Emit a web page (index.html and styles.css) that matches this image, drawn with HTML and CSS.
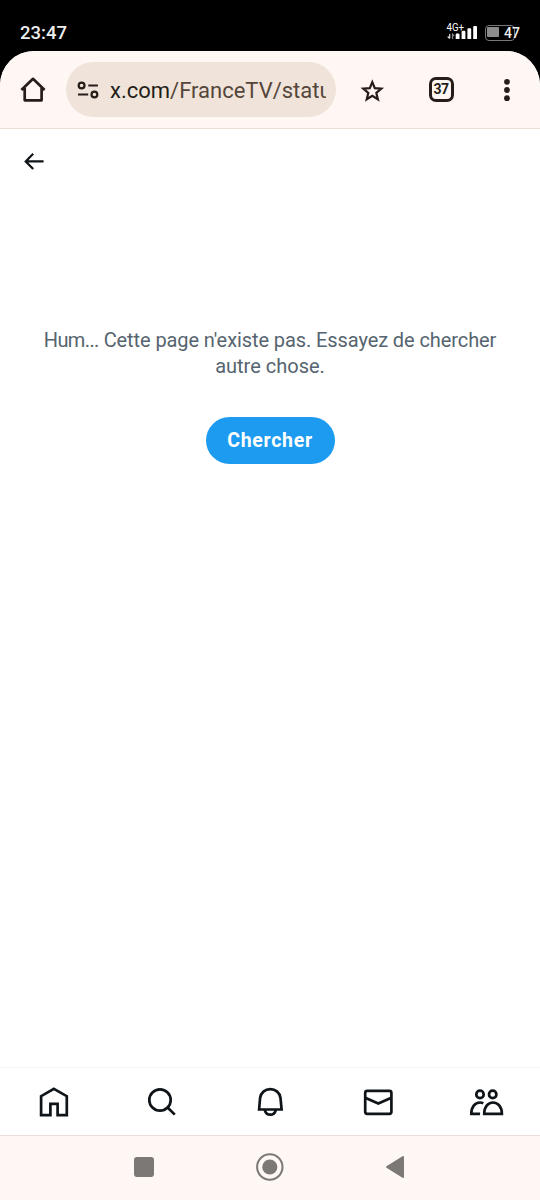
FILE: index.html
```html
<!DOCTYPE html>
<html lang="fr">
<head>
<meta charset="utf-8">
<meta name="viewport" content="width=device-width">
<title>X</title>
<link rel="stylesheet" href="styles.css">
</head>
<body>
<div class="phone">
  <div class="status">
    <span class="clock">23:47</span>
    <div class="indicators">
      <svg class="signal" width="34" height="20" viewBox="446 21 34 20">
        <text class="network" x="446.5" y="31" textLength="17.5" lengthAdjust="spacingAndGlyphs">4G+</text>
        <path fill="#fff" d="M455.7 34.6q0-1 1-1h1.8q1 0 1 1V39h-3.8zM461.6 31.7q0-1 1-1h1.8q1 0 1 1V39h-3.8zM467.4 29.3q0-1 1-1h1.8q1 0 1 1V39h-3.8zM473.2 27q0-1 1-1h1.8q1 0 1 1v12h-3.8z"/>
        <path stroke="#ddd" stroke-width="1.2" fill="none" d="M449.7 34v4.5m-2-2 2 2"/>
        <path stroke="#888" stroke-width="1.2" fill="none" d="M452.5 39v-4.7l1.7 1.7"/>
      </svg>
      <div class="battery"><span class="charge"></span><span class="percent">47</span></div>
    </div>
  </div>
  <div class="screen">
    <header class="toolbar">
      <svg class="tool" width="28" height="28" viewBox="19 76 28 28" fill="none" stroke="#241d18" stroke-width="2.7" stroke-linejoin="round">
        <path d="M21.4 89.9 33 78.8l11.6 11.1M24.7 88v12.3h16.9V88"/>
      </svg>
      <div class="address">
        <svg width="24" height="24" viewBox="76 77.5 24 24" fill="none" stroke="#241d18" stroke-width="2.2">
          <circle cx="81.6" cy="85" r="2.9"/><path d="M88.3 85h9.6M78 94h10.2"/><circle cx="94.4" cy="94" r="2.9"/>
        </svg>
        <span class="url"><b>x.com</b>/FranceTV/statu</span>
      </div>
      <svg class="star" width="28" height="28" viewBox="358 77 28 28" fill="none" stroke="#241d18" stroke-width="2.2">
        <path d="m372.3 82.2 2.5 6 6.5.5-5 4.2 1.6 6.4-5.6-3.4-5.6 3.4 1.6-6.4-5-4.2 6.5-.5z"/>
      </svg>
      <span class="tabs">37</span>
      <svg class="menu" width="8" height="24" viewBox="503 77.5 8 24" fill="#241d18">
        <circle cx="507" cy="81.3" r="2.9"/><circle cx="507" cy="89.5" r="2.9"/><circle cx="507" cy="97.7" r="2.9"/>
      </svg>
    </header>
    <main class="page">
      <svg class="back" width="24" height="24" viewBox="22 149 24 24" fill="none" stroke="#0f1419" stroke-width="2.2">
        <path d="M43.6 161.4H26M33.2 153.8l-7.5 7.6 7.5 7.6"/>
      </svg>
      <section class="missing">
        <p class="message"><span class="line-one"><span class="lead">Hum...</span> Cette page n'existe pas. Essayez de chercher</span> <span class="line-two">autre chose.</span></p>
        <button class="search">Chercher</button>
      </section>
    </main>
    <nav class="bottom">
      <svg viewBox="0 0 36 36"><path d="M17.9 4.8 30.8 12.2v19h-9.2V19.9h-7.2v11.3H5.1v-19z"/></svg>
      <svg viewBox="0 0 36 36"><circle cx="16" cy="16" r="10.7"/><path d="m23.8 23.8 7 6.8"/></svg>
      <svg viewBox="0 0 36 36"><path d="M7.1 25.5 8.1 14C8.7 8.8 13 5.2 18.3 5.2S27.9 8.8 28.5 14l1.1 11.5zM12.7 25.8c.8 3 3 4.9 5.6 4.9s4.8-1.9 5.6-4.9"/></svg>
      <svg viewBox="0 0 36 36"><rect x="5.2" y="6.9" width="26.2" height="22.9" rx="2"/><path d="m5.2 13.8 13.1 5.7 13.1-5.7"/></svg>
      <svg viewBox="0 0 36 36"><circle cx="12" cy="10.4" r="3.7"/><circle cx="24.7" cy="10.4" r="3.7"/><path d="M16.2 29.8h17.7c0-6.8-3.8-11.3-8.9-11.3s-8.8 4.5-8.8 11.3zM12.1 29.8H3.3c0-6.8 3.6-11.3 8.7-11.3 1.2 0 2.2.2 3.3.7"/></svg>
    </nav>
    <div class="system">
      <span class="recent"></span>
      <svg class="home" width="28" height="28" viewBox="0 0 28 28"><circle cx="13.8" cy="14" r="12.7" fill="none" stroke="#7c7876" stroke-width="2"/><circle cx="13.8" cy="14" r="7.6" fill="#7c7876"/></svg>
      <svg class="previous" width="20" height="24" viewBox="0 0 20 24"><path d="M2 12 18 2v20z" fill="#7c7876" stroke="#7c7876" stroke-width="2" stroke-linejoin="round"/></svg>
    </div>
  </div>
</div>
</body>
</html>
```
FILE: styles.css
```css
* { box-sizing: border-box; }
body { margin: 0; background: #000; font-family: Roboto, sans-serif; }
.phone { width: 540px; height: 1200px; display: flex; flex-direction: column; overflow: hidden; }
.status { height: 51px; flex: none; display: flex; justify-content: space-between; padding: 21px 20px 0; color: #eee; }
.clock { font-size: 18.5px; line-height: 24px; font-weight: 500; }
.indicators { display: flex; gap: 5px; }
.network { font: 10px Roboto, sans-serif; fill: #fff; }
.battery { display: flex; align-items: center; width: 35px; height: 14px; margin-top: 4px; position: relative; }
.battery::before { content: ""; position: absolute; left: 0; top: 0; width: 28px; height: 14px; border: 1px solid #777; border-radius: 4px; }
.charge { width: 12px; height: 10px; margin-left: 2px; background: #8c8c8c; border-radius: 1px; }
.percent { position: relative; margin-left: 5px; padding-top: 1px; font-size: 14px; line-height: 14px; font-weight: 500; }
.screen { flex: 1; display: flex; flex-direction: column; background: #fff; border-radius: 34px 34px 0 0; overflow: hidden; }
.toolbar { height: 78px; flex: none; display: flex; align-items: flex-start; padding: 11px 29px 0 19px; background: #fff7f4; border-bottom: 1px solid #efdfd3; }
.tool { margin-top: 14px; }
.address { display: flex; align-items: center; gap: 10px; width: 270px; height: 55px; margin-left: 19px; padding: 0 10px; border-radius: 28px; background: #f0e4da; }
.address svg { flex: none; }
.url { flex: 1; overflow: hidden; white-space: nowrap; padding-top: 2px; font-size: 22px; line-height: 30px; color: #55463b; }
.url b { font-weight: 400; color: #241d18; }
.star { margin: 15px 0 0 22px; }
.tabs { width: 25px; height: 25px; margin: 15px 0 0 42.5px; border: 3px solid #241d18; border-radius: 7px; color: #241d18; font-size: 14px; line-height: 19px; font-weight: 700; text-align: center; letter-spacing: -0.6px; }
.menu { margin: 15.5px 0 0 auto; }
.page { flex: 1; display: flex; flex-direction: column; }
.back { margin: 20px 0 0 22px; }
.missing { display: flex; flex-direction: column; align-items: center; margin-top: 154px; }
.message { margin: 0; width: 470px; text-align: center; font-size: 20px; line-height: 26px; color: #56646f; }
.line-one, .line-two { display: inline-block; white-space: nowrap; }
.line-one { letter-spacing: -0.09px; }
.lead { letter-spacing: -0.6px; }
.search { width: 129px; height: 47px; margin-top: 38px; padding: 0; border: 0; border-radius: 24px; background: #1d9bf0; color: #fff; font: 700 19.5px/46px Roboto, sans-serif; letter-spacing: 0.7px; }
.bottom { height: 68px; flex: none; display: grid; grid-template-columns: repeat(5, 1fr); justify-items: center; padding-top: 16px; border-top: 1px solid #f3f5f6; }
.bottom svg { width: 36px; height: 36px; fill: none; stroke: #0f1419; stroke-width: 2.7; }
.system { height: 65px; flex: none; display: flex; align-items: center; padding: 0 0 2px 134px; background: #fff7f4; border-top: 1px solid #e9e0dc; }
.recent { width: 20px; height: 20px; border-radius: 3px; background: #7c7876; }
.home { margin-left: 102px; }
.previous { margin-left: 101px; }
```
